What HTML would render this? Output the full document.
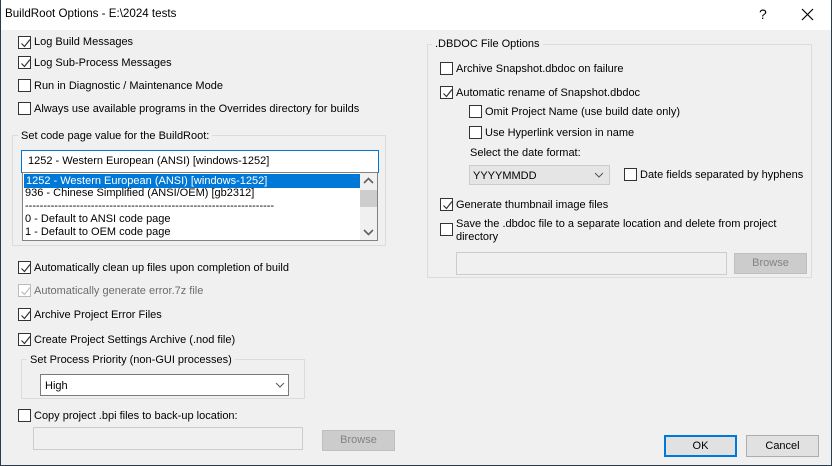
<!DOCTYPE html>
<html><head><meta charset="utf-8"><style>
*{margin:0;padding:0;box-sizing:border-box}
body{width:832px;height:466px;overflow:hidden;background:#f0f0f0;font-family:"Liberation Sans",sans-serif;font-size:11px;color:#000;position:relative}
.a{position:absolute;white-space:nowrap}
.win{position:absolute;left:0;top:0;width:832px;height:466px;border:1px solid #2b3b4b;border-top:none}
.title{position:absolute;left:0;top:0;width:832px;height:30px;background:#fff}
.cb{position:absolute;width:13px;height:13px;border:1px solid #333;background:#fff}
.cb svg{position:absolute;left:1px;top:1px}
.cb.dis{border-color:#bcbcbc}
.grp{position:absolute;border:1px solid #dcdcdc}
.lbl{position:absolute;background:#f0f0f0;padding:0 3px;white-space:nowrap}
.field{position:absolute;border:1px solid #ccc;background:#f0f0f0}
.btn{position:absolute;background:#cccccc;border:1px solid #bfbfbf;color:#838383;text-align:center;line-height:19px}
</style></head><body>
<div class="title"></div>
<div class="a" style="left:5px;top:7px;font-size:11.6px">BuildRoot Options - E:\2024 tests</div>
<div class="a" style="left:759px;top:6px;font-size:14px">?</div>
<svg class="a" style="left:801px;top:8px" width="13" height="13"><path d="M1 1L12 12M12 1L1 12" stroke="#000" stroke-width="1.2"/></svg>

<div class="cb" style="left:18px;top:36px"><svg width="11" height="11"><path d="M1.5 5.5L4.5 8.5L10 1.5" stroke="#333" fill="none" stroke-width="1.2"/></svg></div>
<div class="a" style="left:34px;top:36px">Log Build Messages</div>
<div class="cb" style="left:18px;top:56px"><svg width="11" height="11"><path d="M1.5 5.5L4.5 8.5L10 1.5" stroke="#333" fill="none" stroke-width="1.2"/></svg></div>
<div class="a" style="left:34px;top:57px">Log Sub-Process Messages</div>
<div class="cb" style="left:18px;top:79px"></div>
<div class="a" style="left:34px;top:80px">Run in Diagnostic / Maintenance Mode</div>
<div class="cb" style="left:18px;top:102px"></div>
<div class="a" style="left:34px;top:103px">Always use available programs in the Overrides directory for builds</div>

<div class="grp" style="left:12px;top:135px;width:374px;height:111px"></div>
<div class="lbl" style="left:18px;top:130px">Set code page value for the BuildRoot:</div>
<div class="a" style="left:21px;top:150px;width:358px;height:23px;border:1px solid #0078d7;background:#fff;padding:4px 6px">1252 - Western European (ANSI) [windows-1252]</div>
<div class="a" style="left:22px;top:172px;width:356px;height:69px;border:1px solid #828282;background:#fff;overflow:hidden">
 <div style="position:absolute;left:1px;top:1px;width:336px;height:14px;background:#0078d7;color:#fff;padding-left:2px;line-height:14px">1252 - Western European (ANSI) [windows-1252]</div>
 <div style="position:absolute;left:2px;top:14px;line-height:13px">936 - Chinese Simplified (ANSI/OEM) [gb2312]<br>--------------------------------------------------------------------<br>0 - Default to ANSI code page<br>1 - Default to OEM code page</div>
 <div style="position:absolute;left:337px;top:0;width:17px;height:67px;background:#f0f0f0"></div>
 <div style="position:absolute;left:337px;top:17px;width:17px;height:17px;background:#cdcdcd"></div>
 <svg style="position:absolute;left:340px;top:4px" width="11" height="8"><path d="M1 6L5.5 1.5L10 6" stroke="#606060" fill="none" stroke-width="1.6"/></svg>
 <svg style="position:absolute;left:340px;top:55px" width="11" height="8"><path d="M1 2L5.5 6.5L10 2" stroke="#606060" fill="none" stroke-width="1.6"/></svg>
</div>

<div class="cb" style="left:18px;top:261px"><svg width="11" height="11"><path d="M1.5 5.5L4.5 8.5L10 1.5" stroke="#333" fill="none" stroke-width="1.2"/></svg></div>
<div class="a" style="left:34px;top:262px">Automatically clean up files upon completion of build</div>
<div class="cb dis" style="left:18px;top:284px"><svg width="11" height="11"><path d="M1.5 5.5L4.5 8.5L10 1.5" stroke="#bcbcbc" fill="none" stroke-width="1.2"/></svg></div>
<div class="a" style="left:34px;top:285px;color:#6d6d6d">Automatically generate error.7z file</div>
<div class="cb" style="left:18px;top:308px"><svg width="11" height="11"><path d="M1.5 5.5L4.5 8.5L10 1.5" stroke="#333" fill="none" stroke-width="1.2"/></svg></div>
<div class="a" style="left:34px;top:309px">Archive Project Error Files</div>
<div class="cb" style="left:18px;top:333px"><svg width="11" height="11"><path d="M1.5 5.5L4.5 8.5L10 1.5" stroke="#333" fill="none" stroke-width="1.2"/></svg></div>
<div class="a" style="left:34px;top:334px">Create Project Settings Archive (.nod file)</div>

<div class="grp" style="left:21px;top:359px;width:284px;height:40px"></div>
<div class="lbl" style="left:27px;top:354px">Set Process Priority (non-GUI processes)</div>
<div class="a" style="left:40px;top:374px;width:249px;height:22px;border:1px solid #7a7a7a;background:#fff;padding:5px 4px">High</div>
<svg class="a" style="left:275px;top:382px" width="10" height="6"><path d="M1 1L5 5L9 1" stroke="#555" fill="none"/></svg>

<div class="cb" style="left:18px;top:409px"></div>
<div class="a" style="left:34px;top:410px">Copy project .bpi files to back-up location:</div>
<div class="field" style="left:33px;top:427px;width:270px;height:23px"></div>
<div class="btn" style="left:322px;top:430px;width:73px;height:21px">Browse</div>

<div class="a" style="left:664px;top:435px;width:73px;height:22px;border:2px solid #0078d7;background:#e1e1e1;text-align:center;line-height:18px">OK</div>
<div class="a" style="left:746px;top:435px;width:73px;height:22px;border:1px solid #adadad;background:#e1e1e1;text-align:center;line-height:20px">Cancel</div>

<div class="grp" style="left:427px;top:44px;width:385px;height:234px"></div>
<div class="lbl" style="left:432px;top:38px">.DBDOC File Options</div>
<div class="cb" style="left:440px;top:62px"></div>
<div class="a" style="left:456px;top:63px">Archive Snapshot.dbdoc on failure</div>
<div class="cb" style="left:440px;top:86px"><svg width="11" height="11"><path d="M1.5 5.5L4.5 8.5L10 1.5" stroke="#333" fill="none" stroke-width="1.2"/></svg></div>
<div class="a" style="left:456px;top:87px">Automatic rename of Snapshot.dbdoc</div>
<div class="cb" style="left:469px;top:105px"></div>
<div class="a" style="left:485px;top:106px">Omit Project Name (use build date only)</div>
<div class="cb" style="left:469px;top:126px"></div>
<div class="a" style="left:485px;top:127px">Use Hyperlink version in name</div>
<div class="a" style="left:470px;top:147px">Select the date format:</div>
<div class="a" style="left:469px;top:165px;width:141px;height:20px;border:1px solid #cccccc;background:#e5e5e5;padding:4px 3px">YYYYMMDD</div>
<svg class="a" style="left:594px;top:172px" width="10" height="6"><path d="M1 1L5 5L9 1" stroke="#555" fill="none"/></svg>
<div class="cb" style="left:624px;top:168px"></div>
<div class="a" style="left:640px;top:169px">Date fields separated by hyphens</div>
<div class="cb" style="left:440px;top:198px"><svg width="11" height="11"><path d="M1.5 5.5L4.5 8.5L10 1.5" stroke="#333" fill="none" stroke-width="1.2"/></svg></div>
<div class="a" style="left:456px;top:199px">Generate thumbnail image files</div>
<div class="cb" style="left:440px;top:223px"></div>
<div class="a" style="left:456px;top:218px;line-height:13px">Save the .dbdoc file to a separate location and delete from project<br>directory</div>
<div class="field" style="left:456px;top:252px;width:271px;height:23px"></div>
<div class="btn" style="left:734px;top:253px;width:73px;height:21px">Browse</div>

<div class="win"></div>
</body></html>
